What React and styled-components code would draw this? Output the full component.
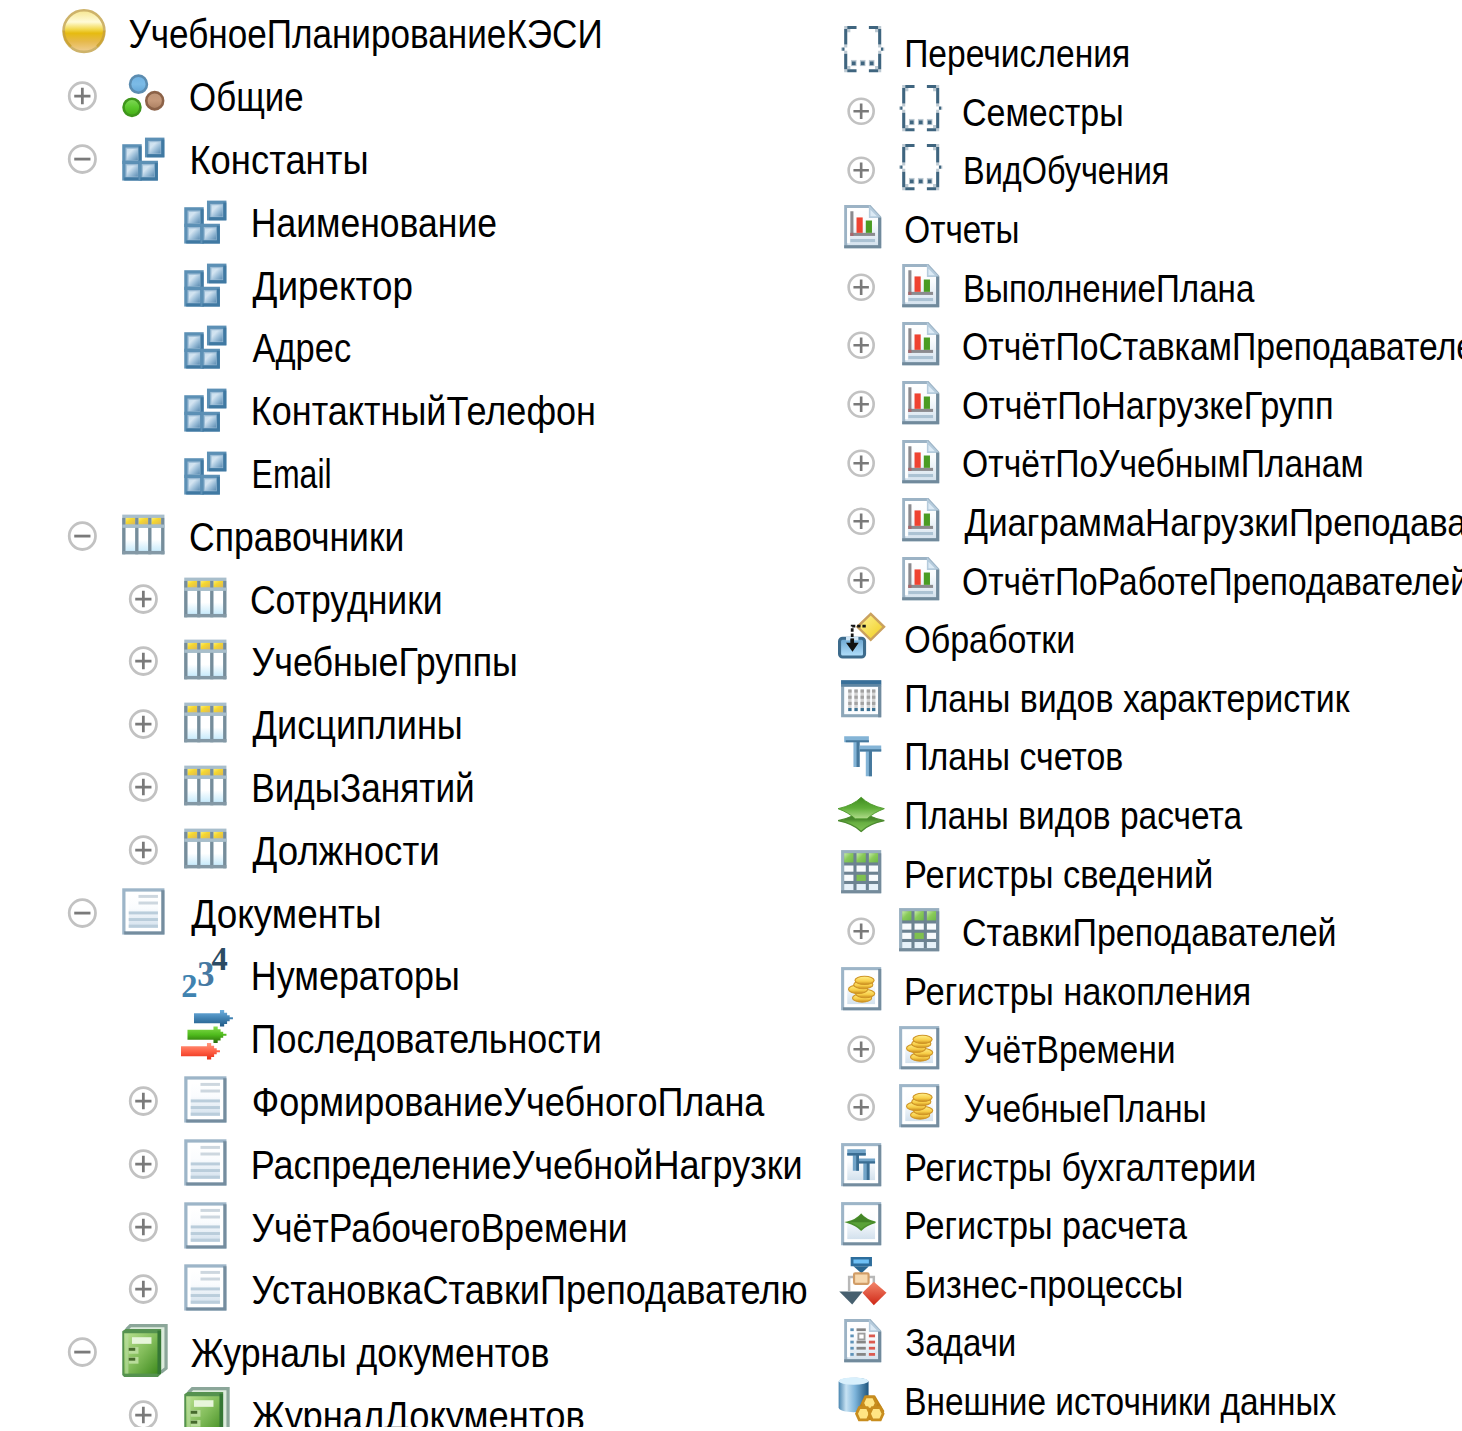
import React, { useLayoutEffect, useState } from "react";
import styled, { createGlobalStyle } from "styled-components";

const GlobalStyle = createGlobalStyle`
  body {
    margin: 0;
    background: #fff;
    color: #000;
    overflow: hidden;
  }
`;

const FONT = '"Liberation Sans", Arial, sans-serif';

const Page = styled.main`
  display: flex;
  align-items: flex-start;
  width: 1462px;
  height: 1431px;
  overflow: hidden;
  font-family: ${FONT};
`;

const Panel = styled.ul`
  flex: none;
  box-sizing: border-box;
  margin: 0;
  padding: ${(p) => p.$pad};
  width: ${(p) => p.$width}px;
  height: ${(p) => p.$height}px;
  overflow: hidden;
  list-style: none;
`;

const Row = styled.li`
  display: flex;
  align-items: center;
  height: ${(p) => p.$m.row}px;
  padding-left: ${(p) => p.$depth * p.$m.ux * 19}px;
  white-space: nowrap;
`;

const Glyph = styled.svg`
  flex: none;
  display: block;
  overflow: visible;
  width: ${(p) => p.$m.ux * p.$cols}px;
  height: ${(p) => p.$m.uy * 16}px;
`;

const LabelText = styled.span`
  flex: none;
  display: block;
  margin-left: ${(p) => p.$m.gap}px;
  padding-top: ${(p) => p.$m.drop}px;
  font-size: ${(p) => p.$m.font}px;
  line-height: ${(p) => p.$m.row - 6}px;
  transform-origin: 0 50%;
`;

const DefsHolder = styled.svg`
  position: absolute;
  width: 0;
  height: 0;
`;

function Label({ m, from, width, children }) {
  const [fit, setFit] = useState({ scale: 0.9, shift: 0 });
  useLayoutEffect(() => {
    const ctx = document.createElement("canvas").getContext("2d");
    ctx.font = `${m.font * 10}px ${FONT}`;
    const t = ctx.measureText(children);
    const left = t.actualBoundingBoxLeft / 10;
    const right = t.actualBoundingBoxRight / 10;
    const scale = width / (right + left);
    setFit({ scale, shift: from + left * scale });
  }, [children, m.font, from, width]);
  return (
    <LabelText
      $m={m}
      style={{ transform: `translateX(${fit.shift}px) scaleX(${fit.scale})` }}
    >
      {children}
    </LabelText>
  );
}

const GRADIENTS = {
  ball: [["0", "#f6e690"], [".28", "#fffbd8"], [".45", "#f3da52"], [".55", "#e6bb10"], [".75", "#e6b94c"], ["1", "#f0cf95"]],
  page: [["0", "#ffffff"], [".4", "#fafcfe"], ["1", "#d3e1ed"]],
  column: [["0", "#ffffff"], [".5", "#ffffff"], ["1", "#c9ebfb"]],
  blueArrow: [["0", "#6fb0e0"], [".5", "#4283b3"], ["1", "#205a86"]],
  greenArrow: [["0", "#85dd4c"], [".5", "#4fbb1d"], ["1", "#286b08"]],
  redArrow: [["0", "#ff9a80"], [".5", "#ff6046"], ["1", "#e82e17"]],
  blueDot: [["0", "#6fb2e2"], [".5", "#7cbbe6"], ["1", "#62a5d6"]],
  greenDot: [["0", "#82d95a"], [".5", "#5bc82c"], ["1", "#43ab16"]],
  brownDot: [["0", "#bd9478"], [".5", "#c6997a"], ["1", "#a97d5f"]],
  leaf: [["0", "#3f8b20"], [".5", "#5fae38"], ["1", "#b1dc8c"]],
  leafLow: [["0", "#356b20"], [".45", "#4a8a2d"], [".6", "#69b042"], ["1", "#80c355"]],
  bluePad: [["0", "#6aa5d0"], ["1", "#b4e1fd"]],
  coin: [["0", "#fff08a"], [".6", "#f8ce48"], ["1", "#c98c1c"]],
  red: [["0", "#f3876c"], ["1", "#cf2716"]],
};
const DIAGONAL = {
  tile: [["0", "#c9dfee"], [".3", "#d3e4f1"], [".6", "#9dbfd9"], ["1", "#5c8cb2"]],
  book: [["0", "#b9e08f"], [".5", "#83bd5b"], ["1", "#3e8a1d"]],
  yellow: [["0", "#fff59a"], ["1", "#efcb1b"]],
  header: [["0", "#ffef72"], [".4", "#f5d72f"], ["1", "#dcb75a"]],
  greenCell: [["0", "#c7ebab"], [".45", "#8acb5a"], ["1", "#6db848"]],
};

const stops = (list) => list.map(([o, c]) => <stop key={o} offset={o} stopColor={c} />);

function Defs() {
  return (
    <DefsHolder aria-hidden="true">
      <defs>
        {Object.entries(GRADIENTS).map(([id, list]) => (
          <linearGradient key={id} id={id} x1="0" y1="0" x2="0" y2="1">{stops(list)}</linearGradient>
        ))}
        {Object.entries(DIAGONAL).map(([id, list]) => (
          <linearGradient key={id} id={id} x1="0" y1="0" x2="1" y2="1">{stops(list)}</linearGradient>
        ))}
        <linearGradient id="drum" x1="0" y1="0" x2="1" y2="0">
          {stops([["0", "#4a86b0"], [".25", "#c7e2f3"], [".55", "#7db4da"], ["1", "#1d557e"]])}
        </linearGradient>
      </defs>
    </DefsHolder>
  );
}

const R = ({ x, y, w, h, f, ...rest }) => <rect x={x} y={y} width={w} height={h} fill={f} {...rest} />;

const Tile = ({ x, y }) => (
  <>
    <R x={x} y={y} w={6} h={6} f="#5c90b5" />
    <R x={x + 1} y={y + 1} w={4} h={4} f="#9dbdd6" />
    <R x={x + 1.4} y={y + 1.4} w={3.4} h={3.4} f="url(#tile)" />
    <path d={`M${x + 5.5} ${y + 0.6}V${y + 5.5}H${x + 0.6}`} fill="none" stroke="#4079a2" strokeWidth=".9" />
  </>
);

const Frame = () => (
  <>
    <R x={1} y={1} w={13} h={14} f="#9db5c8" />
    <path d="M14 1.6V15H1.6V14H13V1.6z" fill="#758d9f" />
    <R x={2} y={2} w={11} h={12} f="#fff" />
    <R x={3} y={3} w={9} h={10} f="url(#page)" />
  </>
);

const Sheet = () => (
  <>
    <path d="M2.5 1.5H10.3L13.5 5V14.5H2.5z" fill="url(#page)" stroke="#9cb3c5" />
    <path d="M3.4 13.4V2.4H10" fill="none" stroke="#fff" strokeWidth=".9" />
    <path d="M10 1L14 5.2H10z" fill="#b5cbdc" />
    <path d="M10.5 2.5V4.6H12.6z" fill="#dceaf5" />
    <path d="M13.5 5V14.5H2" fill="none" stroke="#718a9c" />
  </>
);

const Arrow = ({ x, y, fill }) => (
  <path
    transform={`translate(${x} ${y})`}
    d="M0 1H8V0H9.3V.8H10.2V1.6H11V2.2H12V2.8H11V3.4H10.2V4.2H9.3V5H8V4H0z"
    fill={`url(#${fill})`}
  />
);

const Coin = ({ x, y }) => (
  <ellipse cx={x} cy={y} rx="3.1" ry="1.35" fill="url(#coin)" stroke="#cf9526" strokeWidth=".35" />
);

const Comb = ({ x, y }) => (
  <path
    transform={`translate(${x} ${y})`}
    d="M-1.3-2H1.3L2.2 0L1.3 2H-1.3L-2.2 0z"
    fill="#ffe584"
    stroke="#c88d1e"
    strokeWidth=".9"
  />
);

const ICONS = {
  ball: (
    <>
      <circle cx="8" cy="7.9" r="6.3" fill="url(#ball)" stroke="#ceb36a" strokeWidth=".8" />
      <path d="M1.8 7.7A6.2 6.2 0 0 0 4 12.5M14.2 7.7A6.2 6.2 0 0 1 12 12.5" fill="none" stroke="#cda534" strokeWidth=".7" />
    </>
  ),
  common: (
    <>
      <circle cx="6" cy="4.9" r="2.6" fill="url(#blueDot)" stroke="#5b8cb0" strokeWidth=".8" />
      <circle cx="11" cy="9.9" r="2.6" fill="url(#brownDot)" stroke="#8c6248" strokeWidth=".8" />
      <circle cx="4" cy="11.9" r="2.6" fill="url(#greenDot)" stroke="#3f961c" strokeWidth=".8" />
    </>
  ),
  constant: (
    <>
      <Tile x={1} y={4} />
      <Tile x={1} y={9} />
      <Tile x={6} y={9} />
      <Tile x={8} y={2} />
    </>
  ),
  catalog: (
    <>
      <R x={1} y={2} w={13} h={12} f="#a8becb" />
      {[2, 6, 10].map((x) => (
        <g key={x}>
          <R x={x} y={3} w={3} h={2} f="url(#header)" />
          <R x={x} y={6} w={3} h={7} f="url(#column)" />
        </g>
      ))}
      {[1, 5, 9, 13].map((x) => <R key={x} x={x} y={3} w={0.95} h={11} f="#768d9b" />)}
      <R x={1} y={5} w={13} h={1} f="#a8becb" />
      <R x={1} y={13} w={13} h={1} f="#8499a6" />
    </>
  ),
  document: (
    <>
      <Frame />
      {[3, 5].map((y) => <R key={y} x={6} y={y} w={6} h={0.9} f="#cdd7df" />)}
      {[8, 10, 12].map((y) => <R key={y} x={3} y={y} w={9} h={0.9} f="#bacddb" />)}
    </>
  ),
  numerator: (
    <g fontFamily='"Liberation Serif", serif' fontWeight="700">
      <text x=".1" y="15" fontSize="10" fill="#3f83b0">2</text>
      <text x="5" y="11.8" fontSize="10.6" fill="#4679a3">3</text>
      <text x="9.4" y="7" fontSize="10" fill="#2b4b64">4</text>
    </g>
  ),
  sequence: (
    <>
      <Arrow x={4} y={0} fill="blueArrow" />
      <Arrow x={2} y={5} fill="greenArrow" />
      <Arrow x={0} y={10} fill="redArrow" />
    </>
  ),
  journal: (
    <>
      <path d="M2.5 1.5L3.5 .5H14.5V13.4L13.2 14.4H2.5z" fill="#dcebdc" stroke="#8ba699" />
      <path d="M1 2.2L2 1.5H13V15L12 16H1.6L1 15.4z" fill="#55924f" />
      <R x={1.6} y={2.8} w={10.6} h={12.2} f="url(#book)" />
      <R x={1.9} y={3} w={1} h={12} f="#b7dc9c" opacity=".7" />
      <path d="M12.4 2V15.2" stroke="#357735" strokeWidth="1.1" />
      <R x={4} y={4} w={6} h={2} f="#e7f5da" />
      {[7, 10].map((y) => (
        <g key={y}>
          <R x={3} y={y} w={3} h={2} f="#b9dc9b" />
          <R x={3} y={y + 0.2} w={2} h={0.9} f="#466a2c" />
        </g>
      ))}
    </>
  ),
  enumeration: (
    <g fill="#3f657f">
      {["", "translate(16 0) scale(-1 1)"].map((t) => (
        <g key={t} transform={t}>
          <path d="M3 0H6V1H3zM2 1H3V6H2zM2 9H3V14H2zM3 14H6V15H3z" />
          <path d="M2 0H3V1H2zM3 1H4V2H3zM2 6H3V7H2zM2 8H3V9H2zM1 7H2V8H1zM2 14H3V15H2zM3 13H4V14H3z" opacity=".35" />
          <R x={1.4} y={7} w={0.7} h={1} />
        </g>
      ))}
      {[4.2, 7.1, 10].map((x) => (
        <g key={x}>
          <R x={x} y={11} w={1.8} h={2} opacity=".35" />
          <R x={x + 0.3} y={11.5} w={1.2} h={1.2} />
        </g>
      ))}
    </g>
  ),
  report: (
    <>
      <Sheet />
      <R x={4} y={3} w={1} h={8} f="#8b8b8f" />
      <R x={4} y={10} w={8} h={1} f="#8b8b8f" />
      <R x={4} y={10} w={1} h={1} f="#a8676c" />
      <R x={6} y={5} w={2} h={5} f="#ef4331" />
      <R x={9} y={6} w={2} h={4} f="#4a9c23" />
      <R x={4} y={12} w={8} h={1} f="#abc2d3" />
    </>
  ),
  processing: (
    <>
      <rect x=".5" y="8.5" width="8.1" height="6.1" rx="1" fill="url(#bluePad)" stroke="#3d6b8c" />
      <R x={2.6} y={8} w={4} h={1.2} f="#cfe6f6" />
      <path d="M10.6 .6L14.9 4.8L10.6 9L6.3 4.8z" fill="url(#yellow)" stroke="#caa15e" strokeWidth=".8" />
      <path d="M9 4.6H4.6V10.4" fill="none" stroke="#161616" strokeWidth=".9" strokeDasharray="1.1 .6" />
      <path d="M2.6 10H4V8.6H5.2V10H6.7L4.7 12.9z" fill="#111" />
    </>
  ),
  traits: (
    <>
      <R x={1} y={3} w={13} h={12} f="#8da7b9" />
      <R x={2} y={5} w={11} h={9} f="#fbfdff" />
      <R x={1} y={3} w={13} h={1.3} f="#386f99" />
      <R x={1} y={4.2} w={13} h={0.9} f="#5f86a3" />
      <R x={13} y={5} w={1} h={10} f="#718b9e" />
      {[3.3, 5.3, 7.3, 9.3, 11].map((x) => (
        <g key={x}>
          <R x={x} y={6} w={1.1} h={6} f="#d4d4d4" />
          {[6, 8, 10].map((y) => <R key={y} x={x} y={y} w={1.1} h={1} f="#a2a2a2" />)}
          <R x={x} y={12} w={1.1} h={1} f="#3d7293" />
        </g>
      ))}
    </>
  ),
  accounts: (
    <>
      <path d="M2 2H10V4H7V12H5V4H2z" fill="#84b4d6" />
      <path d="M2.5 3.3H10V4H7V12H6V4H2.5z" fill="#46789c" />
      <path d="M7 5H14V7H11V15H9V7H7z" fill="#84b4d6" />
      <path d="M7 6.2H14V7H11V15H10V7H7z" fill="#46789c" />
    </>
  ),
  calcTypes: (
    <>
      <path d="M0 10.6Q5 9.6 7.5 7Q10 9.6 15 10.6Q10 11.6 7.5 14.1Q5 11.6 0 10.6z" fill="url(#leafLow)" stroke="#4c8a2f" strokeWidth=".4" />
      <path d="M0 6.7Q5 5.6 7.5 3Q10 5.6 15 6.7Q11.5 8 9.4 10H5.6Q3.5 8 0 6.7z" fill="url(#leaf)" stroke="#4f9a2c" strokeWidth=".3" />
    </>
  ),
  infoRegister: (
    <>
      <R x={1} y={1} w={13} h={14} f="#98afbf" />
      <R x={2} y={2} w={11} h={12} f="#6c8291" />
      {[2, 6, 10].map((x) => (
        <g key={x}>
          <R x={x} y={2} w={3} h={3} f="url(#greenCell)" />
          <R x={x} y={6} w={3} h={2} f="#f8fbfd" />
          <R x={x} y={9} w={3} h={2} f={x === 6 ? "#7fc14f" : "#f8fbfd"} />
          <R x={x} y={12} w={3} h={2} f="#e6f1f9" />
        </g>
      ))}
      <path d="M13.5 2V14.5H1" fill="none" stroke="#758b9b" />
    </>
  ),
  accumulation: (
    <>
      <Frame />
      <Coin x={7.8} y={11} />
      <Coin x={8.8} y={9.6} />
      <Coin x={6.5} y={8.2} />
      <Coin x={8.2} y={6.7} />
      <Coin x={8.6} y={5.3} />
    </>
  ),
  accounting: (
    <>
      <Frame />
      <path d="M3 3H9V5H6.8V10H4.8V5H3z" fill="#72a4c8" />
      <path d="M3 4.2H9V5H6.8V10H5.9V5H3z" fill="#3a6d92" />
      <path d="M6.8 6H12V7.5H10.2V13H8.2V7.5H6.8z" fill="#72a4c8" />
      <path d="M6.8 6.9H12V7.6H10.2V13H9.3V7.6H6.8z" fill="#3a6d92" />
    </>
  ),
  calculation: (
    <>
      <Frame />
      <path d="M3 7.5Q6 6.8 7.5 5Q9 6.8 12.1 7.5Q9 8.4 7.5 10Q6 8.4 3 7.5z" fill="#5aa238" stroke="#4a8f2b" strokeWidth=".5" />
      <path d="M3.4 7.5Q6 6.8 7.5 5Q9 6.8 11.7 7.5z" fill="#438427" />
    </>
  ),
  process: (
    <>
      <path d="M3.6 11V6.5H11.6V9" fill="none" stroke="#b8b8b8" strokeWidth=".8" />
      <R x={4.1} y={0} w={6.9} h={3} f="#2d6d9c" />
      <R x={5} y={0.8} w={5} h={1.3} f="#6fc0f5" />
      <path d="M5 3H10L7.6 5.3z" fill="#2a668f" />
      <rect x="5.2" y="5.3" width="4.7" height="3.4" rx=".4" fill="#f7d9af" stroke="#d19d67" strokeWidth=".7" />
      <path d="M.4 11.2H8L4.6 15.4z" fill="#47606f" />
      <path d="M11.6 8L15.7 11.6L11.6 15.6L7.9 11.6z" fill="url(#red)" />
    </>
  ),
  task: (
    <>
      <Sheet />
      {[4, 6, 8, 10, 12].map((y) => (
        <g key={y} transform={`translate(0 ${y})`}>
          <R x={4} y={0} w={1.1} h={0.9} f="#5e92b8" />
          {y !== 6 && <R x={6} y={0} w={3} h={0.9} f="#858585" />}
          {y !== 4 && <R x={10} y={0} w={2} h={0.9} f="#db5a50" />}
        </g>
      ))}
      <rect x="6.6" y="5.7" width="2" height="1.9" fill="#fff" stroke="#9d9d9d" strokeWidth=".6" />
    </>
  ),
  external: (
    <>
      <path d="M.2 2.6C.2.8 9.9.8 9.9 2.6V10.8C9.9 12.9.2 12.9.2 10.8z" fill="url(#drum)" />
      <ellipse cx="5.05" cy="2.3" rx="4.8" ry="1.2" fill="#d9f0fc" />
      <path d="M9 7H12L15 12L14 15H7L6 12z" fill="#c08418" />
      <Comb x={10.2} y={9.4} />
      <Comb x={8.2} y={12.9} />
      <Comb x={12.4} y={12.9} />
    </>
  ),
};

function Expander({ m, state }) {
  return (
    <Glyph $m={m} $cols={19} viewBox="0 0 19 16" preserveAspectRatio="none">
      {state && (
        <>
          <circle cx="7.5" cy="8.5" r="4.05" fill="#fff" stroke="#c2c2c2" strokeWidth=".85" />
          <path d={state === "+" ? "M5 8.5H10M7.5 6V11" : "M5 8.5H10"} stroke="#7a7a7a" strokeWidth=".85" />
        </>
      )}
    </Glyph>
  );
}

const LEFT = { row: 62.8, ux: 3.247, uy: 3.305, font: 41, gap: 19.5, drop: 5.8, base: 57.6 };
const RIGHT = { row: 58.62, ux: 3.088, uy: 3.085, font: 38.4, gap: 18.8, drop: 6.8, base: 837.5 };

/* [depth of the icon, expander, icon, text, ink start, ink end] */
const LEFT_ROWS = [
  [0, null, "ball", "УчебноеПланированиеКЭСИ", 129, 600],
  [1, "+", "common", "Общие", 190.5, 302],
  [1, "-", "constant", "Константы", 192, 366],
  [2, "", "constant", "Наименование", 254, 496],
  [2, "", "constant", "Директор", 253, 412],
  [2, "", "constant", "Адрес", 253, 351],
  [2, "", "constant", "КонтактныйТелефон", 254, 594],
  [2, "", "constant", "Email", 254.5, 330],
  [1, "-", "catalog", "Справочники", 190.5, 402],
  [2, "+", "catalog", "Сотрудники", 252, 441],
  [2, "+", "catalog", "УчебныеГруппы", 252.5, 516],
  [2, "+", "catalog", "Дисциплины", 253, 461],
  [2, "+", "catalog", "ВидыЗанятий", 254.5, 473],
  [2, "+", "catalog", "Должности", 253, 438],
  [1, "-", "document", "Документы", 191, 379],
  [2, "", "numerator", "Нумераторы", 254, 458],
  [2, "", "sequence", "Последовательности", 254, 600],
  [2, "+", "document", "ФормированиеУчебногоПлана", 254, 765],
  [2, "+", "document", "РаспределениеУчебнойНагрузки", 254, 801],
  [2, "+", "document", "УчётРабочегоВремени", 252.5, 626],
  [2, "+", "document", "УстановкаСтавкиПреподавателю", 252.5, 807],
  [1, "-", "journal", "Журналы документов", 190.5, 548],
  [2, "+", "journal", "ЖурналДокументов", 252, 584],
];

const RIGHT_ROWS = [
  [0, null, "enumeration", "Перечисления", 906.5, 1128],
  [1, "+", "enumeration", "Семестры", 964, 1122],
  [1, "+", "enumeration", "ВидОбучения", 966, 1168],
  [0, null, "report", "Отчеты", 905.5, 1017],
  [1, "+", "report", "ВыполнениеПлана", 966, 1255],
  [1, "+", "report", "ОтчётПоСтавкамПреподавателей", 964, 1492.5],
  [1, "+", "report", "ОтчётПоНагрузкеГрупп", 964, 1332],
  [1, "+", "report", "ОтчётПоУчебнымПланам", 964, 1362],
  [1, "+", "report", "ДиаграммаНагрузкиПреподавателей", 965, 1557],
  [1, "+", "report", "ОтчётПоРаботеПреподавателей", 964, 1467.5],
  [0, null, "processing", "Обработки", 905.5, 1073],
  [0, null, "traits", "Планы видов характеристик", 906.5, 1350],
  [0, null, "accounts", "Планы счетов", 906.5, 1122],
  [0, null, "calcTypes", "Планы видов расчета", 906.5, 1242],
  [0, null, "infoRegister", "Регистры сведений", 906.5, 1211],
  [1, "+", "infoRegister", "СтавкиПреподавателей", 964, 1335],
  [0, null, "accumulation", "Регистры накопления", 906.5, 1249],
  [1, "+", "accumulation", "УчётВремени", 964.5, 1174],
  [1, "+", "accumulation", "УчебныеПланы", 964.5, 1205],
  [0, null, "accounting", "Регистры бухгалтерии", 906.5, 1254],
  [0, null, "calculation", "Регистры расчета", 906.5, 1187],
  [0, null, "process", "Бизнес-процессы", 906.5, 1181],
  [0, null, "task", "Задачи", 906, 1014],
  [0, null, "external", "Внешние источники данных", 906.5, 1336],
];

function Tree({ m, rows, ...panel }) {
  return (
    <Panel {...panel}>
      {rows.map(([depth, state, icon, text, start, end]) => {
        const labelLeft = m.base + (depth * 19 + 16) * m.ux + m.gap;
        return (
          <Row key={text} $m={m} $depth={state === null ? depth : depth - 1}>
            {state !== null && <Expander m={m} state={state} />}
            <Glyph $m={m} $cols={16} viewBox="0 0 16 16" preserveAspectRatio="none">
              {ICONS[icon]}
            </Glyph>
            <Label m={m} from={start - labelLeft} width={end - start}>{text}</Label>
          </Row>
        );
      })}
    </Panel>
  );
}

export default function App() {
  return (
    <>
      <GlobalStyle />
      <Defs />
      <Page>
        <Tree m={LEFT} rows={LEFT_ROWS} $pad="0.5px 0 0 57.6px" $width={837.5} $height={1427} />
        <Tree m={RIGHT} rows={RIGHT_ROWS} $pad="21.7px 0 0 0" $width={624.5} $height={1431} />
      </Page>
    </>
  );
}
